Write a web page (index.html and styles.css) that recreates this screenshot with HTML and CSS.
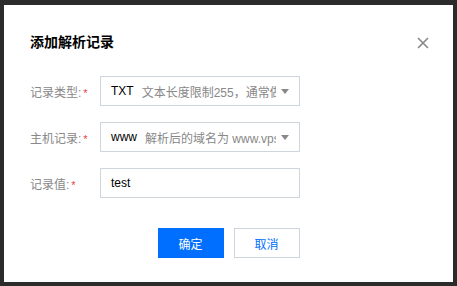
FILE: index.html
```html
<!DOCTYPE html>
<html>
<head>
<meta name="viewport" content="width=device-width, initial-scale=1">
<link rel="stylesheet" href="styles.css">
</head>
<body>

<div class="dialog">
  <div class="dialog-head">
    <h3 class="dialog-title">添加解析记录</h3>
    <span class="dialog-close">
      <svg width="12" height="12" viewBox="0 0 12 12"><path d="M1 1 L11 11 M11 1 L1 11" stroke="#888" stroke-width="1.6" fill="none"/></svg>
    </span>
  </div>

  <div class="form">
    <div class="form-row">
      <label class="form-label">记录类型:<i class="req">*</i></label>
      <div class="field select">
        <span class="val">TXT</span>
        <span class="hint">文本长度限制255，通常做SPF记录</span>
        <span class="caret"></span>
      </div>
    </div>

    <div class="form-row">
      <label class="form-label">主机记录:<i class="req">*</i></label>
      <div class="field select">
        <span class="val">www</span>
        <span class="hint">解析后的域名为 www.vps.com</span>
        <span class="caret"></span>
      </div>
    </div>

    <div class="form-row">
      <label class="form-label">记录值:<i class="req">*</i></label>
      <div class="field">
        <span class="val">test</span>
      </div>
    </div>
  </div>

  <div class="dialog-foot">
    <button class="btn btn-primary">确定</button>
    <button class="btn">取消</button>
  </div>
</div>

</body>
</html>
```

FILE: styles.css
```css
body {
  margin: 0;
  background: #2b2b2b;
  font-family: "Liberation Sans", "Noto Sans CJK SC", sans-serif;
}

.dialog {
  width: 449px;
  height: 277px;
  margin: 5px 0 0 4px;
  background: #fff;
  box-sizing: border-box;
  padding: 28px 24px 0 26px;
}

.dialog-head {
  display: flex;
  justify-content: space-between;
  align-items: center;
  height: 18px;
}

.dialog-title {
  margin: 0;
  font-size: 14px;
  line-height: 18px;
  font-weight: bold;
  color: #000;
}

.dialog-close {
  display: flex;
  width: 12px;
  height: 12px;
  margin-top: 2px;
}

.form {
  margin-top: 25px;
  display: flex;
  flex-direction: column;
  gap: 16px;
}

.form-row {
  display: flex;
  align-items: center;
  height: 30px;
}

.form-label {
  width: 70px;
  font-size: 12px;
  color: #888;
}

.req {
  font-style: normal;
  color: #e54545;
  font-size: 11px;
  margin-left: 2px;
}

.field {
  width: 200px;
  height: 30px;
  box-sizing: border-box;
  border: 1px solid #cfd5de;
  padding: 0 10px;
  display: flex;
  align-items: center;
  font-size: 12px;
  color: #000;
}

.val {
  flex: none;
}

.hint {
  flex: 1;
  min-width: 0;
  overflow: hidden;
  white-space: nowrap;
  color: #888;
  margin-left: 8px;
}

.caret {
  flex: none;
  width: 0;
  height: 0;
  margin-left: 5px;
  border-left: 4px solid transparent;
  border-right: 4px solid transparent;
  border-top: 5px solid #888;
}

.dialog-foot {
  margin-top: 30px;
  display: flex;
  justify-content: center;
  gap: 10px;
  padding-right: 2px;
}

.btn {
  width: 66px;
  height: 30px;
  box-sizing: border-box;
  border: 1px solid #cfd5de;
  background: #fff;
  color: #006eff;
  font-size: 12px;
  font-family: "Liberation Sans", "Noto Sans CJK SC", sans-serif;
  padding: 0;
}

.btn-primary {
  background: #006eff;
  border-color: #006eff;
  color: #fff;
}
```
